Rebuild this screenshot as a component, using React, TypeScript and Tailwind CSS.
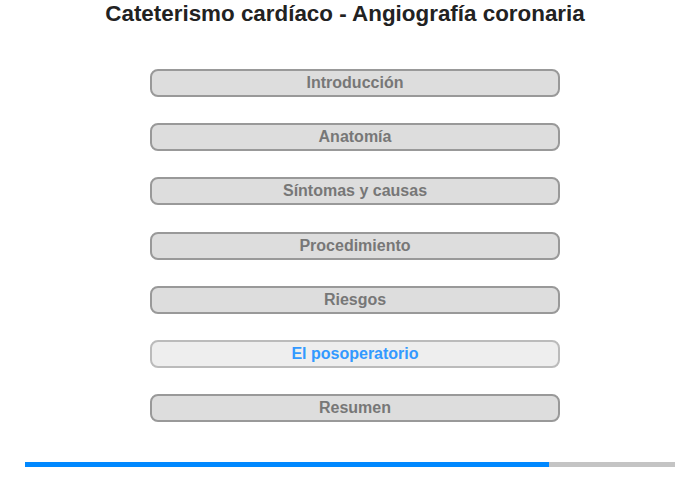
const sections = [
  "Introducción",
  "Anatomía",
  "Síntomas y causas",
  "Procedimiento",
  "Riesgos",
  "El posoperatorio",
  "Resumen",
];

const activeIndex = 5;

export default function App() {
  return (
    <div className="w-[700px] h-[480px] bg-white font-['Liberation_Sans',Arial,sans-serif] overflow-hidden">
      <h1 className="pt-[1px] text-center text-[22.4px] leading-[26px] font-bold text-[#222] pr-[10px]">
        Cateterismo cardíaco - Angiografía coronaria
      </h1>
      <div className="mt-[42px] ml-[150px] w-[410px] flex flex-col gap-[26.2px]">
        {sections.map((s, i) => (
          <div
            key={s}
            className={
              i === activeIndex
                ? "h-[28px] rounded-[8px] border-2 border-[#bbbbbb] bg-[#eeeeee] flex items-center justify-center text-[16px] font-bold text-[#3399ff]"
                : "h-[28px] rounded-[8px] border-2 border-[#999999] bg-[#dddddd] flex items-center justify-center text-[16px] font-bold text-[#777777]"
            }
          >
            {s}
          </div>
        ))}
      </div>
      <div className="mt-[40px] mx-[25px] h-[5px] bg-[#c4c4c4] flex">
        <div className="h-full bg-[#0088ff]" style={{ width: `${(524 / 650) * 100}%` }} />
      </div>
    </div>
  );
}
